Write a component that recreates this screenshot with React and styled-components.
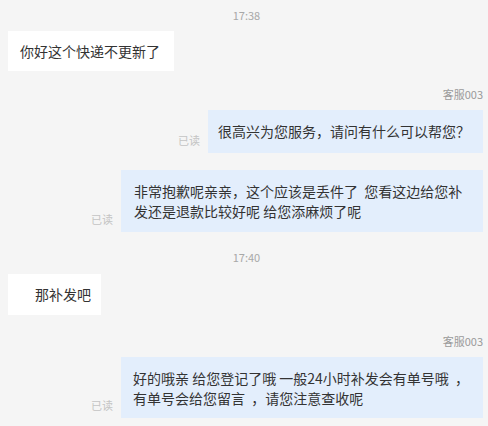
import React from 'react'
import styled, { createGlobalStyle } from 'styled-components'

const GlobalStyle = createGlobalStyle`
	html, body {
		margin: 0;
		padding: 0;
		background: #f5f5f5;
	}
	body {
		font-family: "Noto Sans CJK SC", "Noto Sans", sans-serif;
	}
`

const ChatWindow = styled.div`
	width: 488px;
	height: 426px;
	box-sizing: border-box;
	padding: 0 5px 0 8px;
	display: flex;
	flex-direction: column;
	background: #f5f5f5;
	overflow: hidden;
`

const TimeStamp = styled.div`
	margin-top: ${({ $top }) => $top}px;
	text-align: center;
	font-size: 11px;
	line-height: 14px;
	color: #a8a8a8;
	padding-left: 2px;
`

const SenderName = styled.div`
	margin-top: ${({ $top }) => $top}px;
	text-align: right;
	font-size: 11px;
	line-height: 14px;
	color: #9a9a9a;
`

const Row = styled.div`
	margin-top: ${({ $top }) => $top}px;
	display: flex;
	align-items: flex-end;
	justify-content: ${({ $mine }) => ($mine ? 'flex-end' : 'flex-start')};
	gap: 8px;
`

const ReadMark = styled.span`
	font-size: 11px;
	line-height: 14px;
	color: #c4c4c4;
	margin-bottom: 6px;
`

const Bubble = styled.div`
	max-width: 362px;
	box-sizing: border-box;
	padding: ${({ $pad }) => $pad};
	font-size: 14px;
	line-height: ${({ $lh }) => $lh}px;
	color: #333;
	white-space: pre-wrap;
	background: ${({ $mine }) => ($mine ? '#e3eefc' : '#ffffff')};
`

const messages = [
	{ type: 'time', text: '17:38', top: 8 },
	{ type: 'msg', text: '你好这个快递不更新了', top: 9, pad: '10px 14px 10px 12px', lh: 20 },
	{ type: 'name', text: '客服003', top: 16 },
	{ type: 'msg', mine: true, text: '很高兴为您服务，请问有什么可以帮您？', top: 9, pad: '11px 13px 11px 10px', lh: 21 },
	{ type: 'msg', mine: true, text: '非常抱歉呢亲亲，这个应该是丢件了  您看这边给您补发还是退款比较好呢 给您添麻烦了呢', top: 17, pad: '11px 11px 11px 13px', lh: 20 },
	{ type: 'time', text: '17:40', top: 18 },
	{ type: 'msg', text: '\u3000那补发吧', top: 10, pad: '10px 10px 10px 13px', lh: 21 },
	{ type: 'name', text: '客服003', top: 19 },
	{ type: 'msg', mine: true, text: '好的哦亲 给您登记了哦 一般24小时补发会有单号哦  ，有单号会给您留言  ，请您注意查收呢', top: 9, pad: '10.5px 11px 10.5px 12px', lh: 20 }
]

export default function App() {
	return (
		<>
			<GlobalStyle />
			<ChatWindow>
				{messages.map((m, i) => {
					if (m.type === 'time') return <TimeStamp key={i} $top={m.top}>{m.text}</TimeStamp>
					if (m.type === 'name') return <SenderName key={i} $top={m.top}>{m.text}</SenderName>
					return (
						<Row key={i} $top={m.top} $mine={m.mine}>
							{m.mine && <ReadMark>已读</ReadMark>}
							<Bubble $mine={m.mine} $pad={m.pad} $lh={m.lh}>{m.text}</Bubble>
						</Row>
					)
				})}
			</ChatWindow>
		</>
	)
}
